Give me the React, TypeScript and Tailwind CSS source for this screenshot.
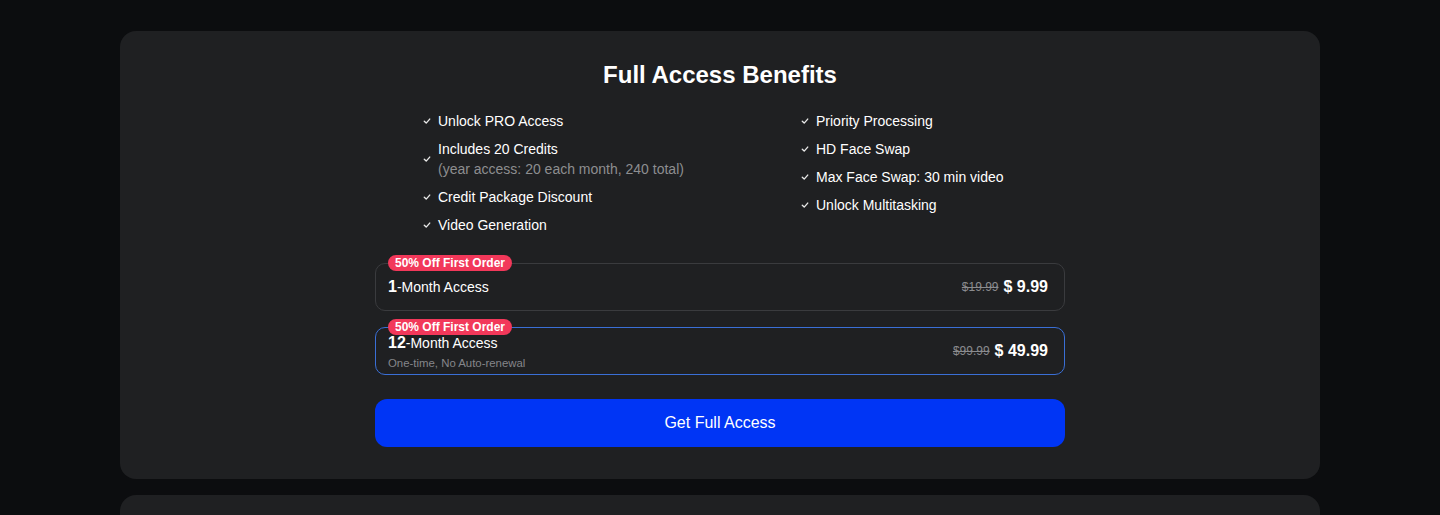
import React from "react";

type Benefit = {
    title: string;
    sub?: string;
}

const leftBenefits: Benefit[] = [
    { title: "Unlock PRO Access" },
    { title: "Includes 20 Credits", sub: "(year access: 20 each month, 240 total)" },
    { title: "Credit Package Discount" },
    { title: "Video Generation" },
];

const rightBenefits: Benefit[] = [
    { title: "Priority Processing" },
    { title: "HD Face Swap" },
    { title: "Max Face Swap: 30 min video" },
    { title: "Unlock Multitasking" },
];

function Check() {
    return (
        <svg width="8" height="8" viewBox="0 0 10 10" fill="none" className="shrink-0">
            <path d="M1.6 5.4 L4 7.6 L8.4 2.6" stroke="#e8e8e8" strokeWidth="1.7" strokeLinecap="round" strokeLinejoin="round" />
        </svg>
    );
}

function BenefitList(props: { items: Benefit[] }) {
    return (
        <ul className="flex flex-col gap-2">
            {props.items.map((b) => (
                <li key={b.title} className="flex items-center gap-[7px]">
                    <Check />
                    <div className="flex flex-col">
                        <span className="text-sm leading-5 text-white">{b.title}</span>
                        {b.sub && <span className="text-sm leading-5 text-[#8d8e90]">{b.sub}</span>}
                    </div>
                </li>
            ))}
        </ul>
    );
}

type PlanParams = {
    num: string;
    sub?: string;
    oldPrice: string;
    price: string;
    selected?: boolean;
}

function Plan(props: PlanParams) {
    return (
        <div
            className={
                props.selected
                    ? "relative flex h-12 items-center justify-between rounded-[10px] border border-[#3a6fd6] px-[12px]"
                    : "relative flex h-12 items-center justify-between rounded-[10px] border border-[#3a3b3e] px-[12px]"
            }
        >
            <span className="absolute -top-[9px] left-[12px] rounded-full bg-[#f2385a] px-[7px] text-xs leading-4 font-bold text-white">
                50% Off First Order
            </span>
            <div className="flex flex-col">
                <span className="text-sm leading-[18px] text-white">
                    <span className="text-base font-bold">{props.num}</span>-Month Access
                </span>
                {props.sub && <span className="text-[11.4px] leading-4 text-[#85868a]">{props.sub}</span>}
            </div>
            <div className="flex items-center gap-[5px] pr-1">
                <span className="text-xs text-[#8a8b8e] line-through">{props.oldPrice}</span>
                <span className="text-base font-bold text-white">{props.price}</span>
            </div>
        </div>
    );
}

export default function App() {
    return (
        <div className="min-h-[515px] bg-[#0c0d0f] pt-[31px] font-['Liberation_Sans',Arial,sans-serif]">
            <div className="mx-auto w-[1200px] rounded-2xl bg-[#1f2022] pt-[30px] pb-[32px]">
                <h2 className="text-center text-2xl leading-7 font-bold text-white">Full Access Benefits</h2>
                <div className="mx-auto mt-[22px] w-[690px]">
                    <div className="grid grid-cols-[378px_1fr] pl-[48px]">
                        <BenefitList items={leftBenefits} />
                        <BenefitList items={rightBenefits} />
                    </div>
                    <div className="mt-7 flex flex-col gap-4">
                        <Plan num="1" oldPrice="$19.99" price="$ 9.99" />
                        <Plan num="12" sub="One-time, No Auto-renewal" oldPrice="$99.99" price="$ 49.99" selected />
                    </div>
                    <button className="mt-6 flex h-12 w-full items-center justify-center rounded-xl bg-[#0035f5] text-base text-white">
                        Get Full Access
                    </button>
                </div>
            </div>
            <div className="mx-auto mt-4 h-[40px] w-[1200px] rounded-t-2xl bg-[#1f2022]" />
        </div>
    );
}
